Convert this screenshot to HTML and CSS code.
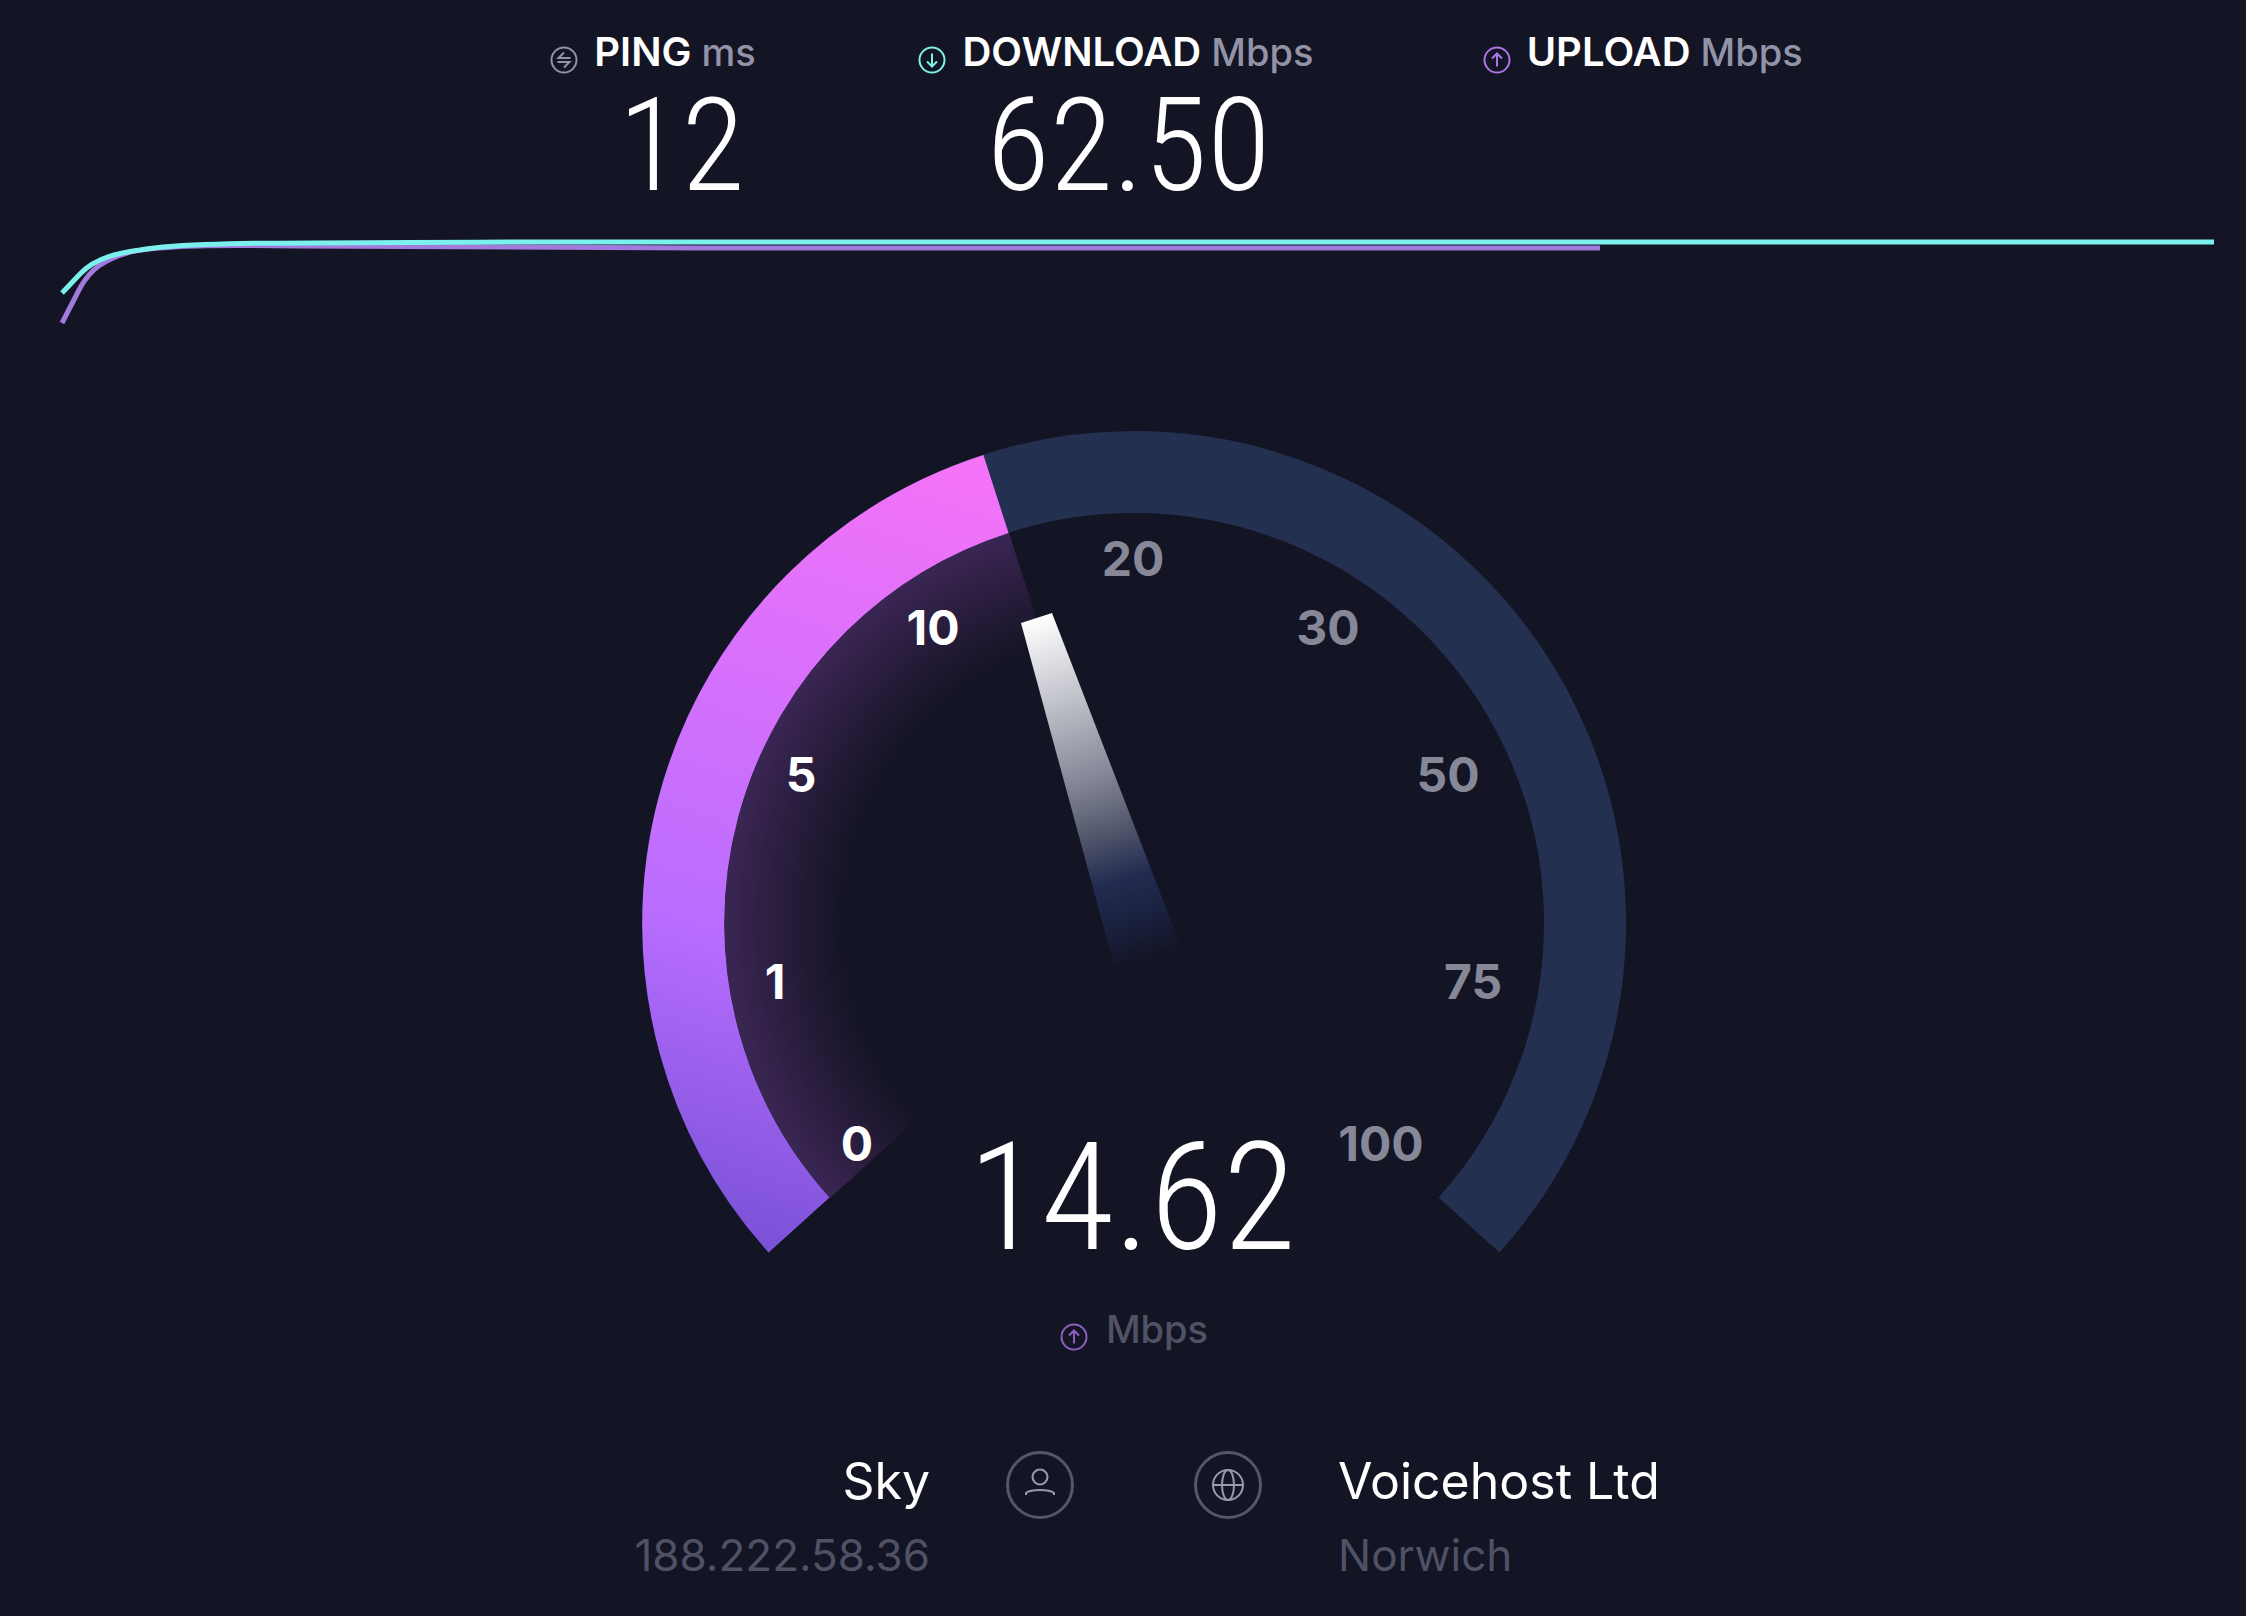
FILE: index.html
```
<!doctype html>
<html lang="en">
  <head>
    <meta charset="UTF-8" />
    <meta name="viewport" content="width=device-width, initial-scale=1.0" />
    <title>Speed Test</title>
    <link rel="stylesheet" href="styles.css">
  </head>
  <body>
    <header class="stats">
      <div class="stat">
        <h2 class="stat-label">
          <svg class="icon icon-ping" viewBox="0 0 28 28">
            <circle cx="14" cy="14" r="12.5" />
            <path d="M14 6.5 8.5 12H20.5M7.5 16H19.5L14 21.500" />
          </svg>
          <span>PING <span class="unit">ms</span></span>
        </h2>
        <p class="stat-value">12</p>
      </div>
      <div class="stat">
        <h2 class="stat-label">
          <svg class="icon icon-download" viewBox="0 0 28 28">
            <circle cx="14" cy="14" r="12.5" />
            <path d="M14 7.500V20M9 15.500 14 20.500 19 15.500" />
          </svg>
          <span>DOWNLOAD <span class="unit">Mbps</span></span>
        </h2>
        <p class="stat-value">62.50</p>
      </div>
      <div class="stat">
        <h2 class="stat-label">
          <svg class="icon icon-upload" viewBox="0 0 28 28">
            <circle cx="14" cy="14" r="12.5" />
            <path d="M14 20.500V8M9 12.500 14 7.500 19 12.500" />
          </svg>
          <span>UPLOAD <span class="unit">Mbps</span></span>
        </h2>
      </div>
    </header>

    <svg class="chart" viewBox="0 0 2246 112">
      <path class="line-upload" d="M62 105 80 70C90 52 102 42 130 34C165 27 220 27 300 28C400 29 500 30 700 30H1600" />
      <path class="line-download" d="M62 75 80 56C95 40 116 34 163 29C230 24 300 25 530 24H2214" />
    </svg>

    <main>
      <svg class="gauge" viewBox="0 0 984 860">
        <defs>
          <linearGradient id="arcFill" gradientUnits="userSpaceOnUse" x1="100" y1="822" x2="342" y2="25">
            <stop offset="0" stop-color="#7850d6" />
            <stop offset="0.36" stop-color="#b96dff" />
            <stop offset="1" stop-color="#f673f8" />
          </linearGradient>
          <radialGradient id="glow" gradientUnits="userSpaceOnUse" cx="492" cy="492" r="410">
            <stop offset="0.7" stop-color="#3c2452" stop-opacity="0" />
            <stop offset="0.88" stop-color="#3c2452" stop-opacity="0.6" />
            <stop offset="1" stop-color="#3a2654" />
          </radialGradient>
          <linearGradient id="needleFill" gradientUnits="userSpaceOnUse" x1="394" y1="187" x2="502" y2="532">
            <stop offset="0" stop-color="#ffffff" />
            <stop offset="0.2" stop-color="#cbccd3" />
            <stop offset="0.46" stop-color="#868998" />
            <stop offset="0.64" stop-color="#4c5268" />
            <stop offset="0.76" stop-color="#232b50" />
            <stop offset="0.86" stop-color="#1b2342" />
            <stop offset="1" stop-color="#131424" />
          </linearGradient>
        </defs>

        <path fill="url(#glow)" d="M492 492 188 767A410 410 0 0 1 367 102Z" />
        <path class="arc" d="M157 794A451 451 0 1 1 827 794" />
        <path class="arc arc-active" d="M157 794A451 451 0 0 1 354 63" />
        <path fill="url(#needleFill)" d="M379 192 410 182 543 526 472 534Z" />

        <g class="ticks">
          <text class="reached" x="215" y="730">0</text>
          <text class="reached" x="133" y="568">1</text>
          <text class="reached" x="159" y="361">5</text>
          <text class="reached" x="291" y="214">10</text>
          <text x="491" y="145">20</text>
          <text x="686" y="214">30</text>
          <text x="806" y="361">50</text>
          <text x="831" y="568">75</text>
          <text x="739" y="730">100</text>
        </g>
        <text class="speed" x="490" y="818">14.62</text>
      </svg>

      <p class="gauge-unit">
        <svg class="icon icon-upload" viewBox="0 0 28 28">
          <circle cx="14" cy="14" r="12.5" />
          <path d="M14 20.500V8M9 12.500 14 7.500 19 12.500" />
        </svg>
        <span>Mbps</span>
      </p>
    </main>

    <footer class="hosts">
      <div class="host host-client">
        <p class="host-name">Sky</p>
        <p class="host-info">188.222.58.36</p>
      </div>
      <div class="host-icons">
        <svg viewBox="0 0 68 68">
          <circle class="ring" cx="34" cy="34" r="32.500" />
          <circle cx="34" cy="26" r="7.500" />
          <path d="M20 44V42C25 38 43 38 48 42V44" />
        </svg>
        <svg viewBox="0 0 68 68">
          <circle class="ring" cx="34" cy="34" r="32.500" />
          <circle cx="34" cy="34" r="15" />
          <ellipse cx="34" cy="34" rx="6" ry="15" />
          <path d="M19 34H49" />
        </svg>
      </div>
      <div class="host">
        <p class="host-name">Voicehost Ltd</p>
        <p class="host-info">Norwich</p>
      </div>
    </footer>
  </body>
</html>
```
FILE: styles.css
```
* {
  box-sizing: border-box;
}

body {
  margin: 0;
  min-height: 100vh;
  background-color: #131424;
  color: #fff;
  font-family: Inter, sans-serif;
}

h2,
p {
  margin: 0;
}

svg {
  display: block;
  fill: none;
}

/* top results */
.stats {
  display: grid;
  grid-template-columns: 368fr 564fr 763fr;
  padding: 30px 0 0 24.5%;
}

.stat-label {
  display: flex;
  align-items: flex-end;
  gap: 16px;
  font-size: 40px;
  font-weight: 600;
  line-height: 44px;
  white-space: nowrap;
}

.unit {
  color: #9393a8;
  font-size: 38px;
  font-weight: 500;
}

.stat-value {
  min-height: 144px;
  padding-left: 68px;
  font-family: "Roboto Condensed", Roboto, sans-serif;
  font-size: 130px;
  font-weight: 300;
  line-height: 144px;
}

.icon {
  flex: none;
  width: 28px;
  height: 28px;
  stroke-width: 2;
}

.icon-ping {
  stroke: #9393a8;
}

.icon-download {
  stroke: #7cf3ea;
}

.icon-upload {
  stroke: #ac74e6;
}

/* history lines */
.chart {
  width: 100%;
  stroke-width: 5;
}

.line-download {
  stroke: #7cf0ec;
}

.line-upload {
  stroke: #a279dc;
}

/* gauge */
main {
  padding: 101px 0 0 22px;
}

.gauge {
  width: 100%;
  max-width: 984px;
  margin: 0 auto;
}

.arc {
  stroke: #24304f;
  stroke-width: 82;
}

.arc-active {
  stroke: url(#arcFill);
}

.ticks {
  fill: #868897;
  font-size: 48px;
  font-weight: 700;
  text-anchor: middle;
}

.ticks .reached {
  fill: #fff;
}

.speed {
  fill: #fff;
  font-family: "Roboto Condensed", Roboto, sans-serif;
  font-size: 150px;
  font-weight: 300;
  text-anchor: middle;
}

.gauge-unit {
  display: flex;
  justify-content: center;
  align-items: flex-end;
  gap: 18px;
  margin-top: 16px;
  color: #515264;
  font-size: 38px;
  font-weight: 500;
  line-height: 44px;
}

.gauge-unit .icon {
  opacity: 0.8;
}

/* provider and server */
.hosts {
  display: grid;
  grid-template-columns: 1fr 256px 1fr;
  column-gap: 76px;
  padding: 100px 0 32px 22px;
}

.host-client {
  text-align: right;
}

.host-name {
  font-size: 50px;
  line-height: 60px;
}

.host-info {
  margin-top: 16px;
  color: #505164;
  font-size: 44px;
  line-height: 56px;
}

.host-icons {
  display: flex;
  justify-content: space-between;
}

.host-icons svg {
  width: 68px;
  height: 68px;
  stroke: #9a9aac;
  stroke-width: 2;
}

.host-icons .ring {
  stroke: #555668;
  stroke-width: 3;
}
```
